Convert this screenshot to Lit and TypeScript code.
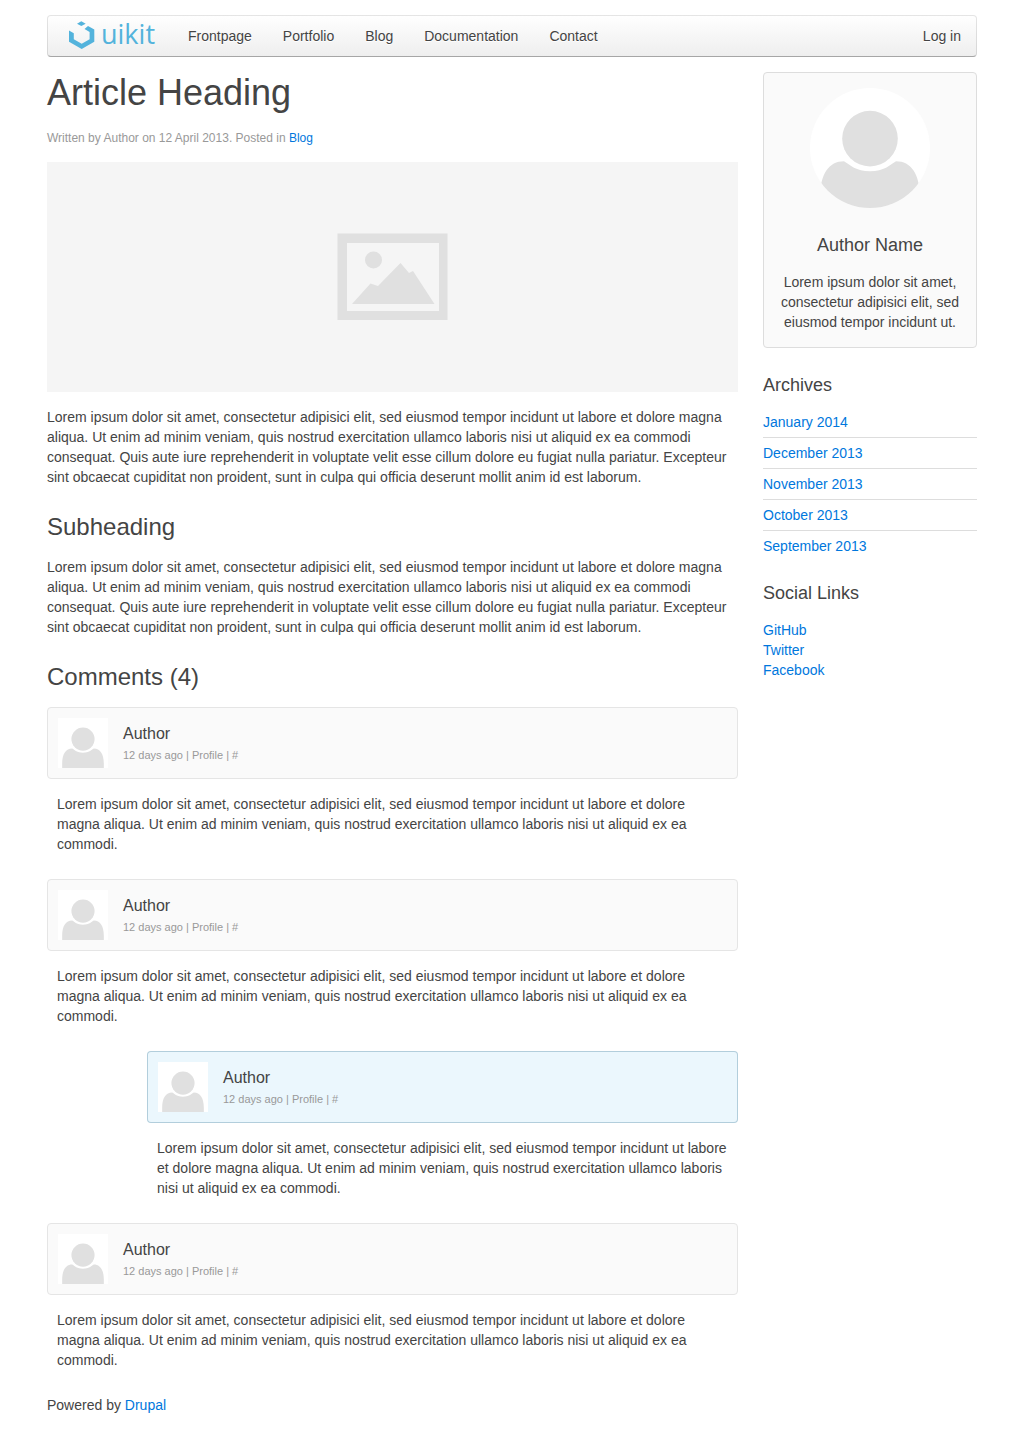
import { LitElement, html, css } from "lit";
import { customElement, property } from "lit/decorators.js";

const LOREM =
  "Lorem ipsum dolor sit amet, consectetur adipisici elit, sed eiusmod tempor incidunt ut labore et dolore magna aliqua. Ut enim ad minim veniam, quis nostrud exercitation ullamco laboris nisi ut aliquid ex ea commodi";
const LOREM_SHORT = LOREM + ".";
const LOREM_LONG =
  LOREM +
  " consequat. Quis aute iure reprehenderit in voluptate velit esse cillum dolore eu fugiat nulla pariatur. Excepteur sint obcaecat cupiditat non proident, sunt in culpa qui officia deserunt mollit anim id est laborum.";

const shared = css`
  * { box-sizing: border-box; }
  a { color: #07d; text-decoration: none; }
  a:hover { color: #059; text-decoration: underline; }
  h1, h2, h3, h4, p, ul { margin: 0; padding: 0; font-weight: normal; }
  ul { list-style: none; }
  svg { display: block; }
`;

@customElement("site-navbar")
export class SiteNavbar extends LitElement {
  static styles = [
    shared,
    css`
      :host { display: block; }
      .bar {
        display: flex;
        background: linear-gradient(to bottom, #fff, #eee);
        border: 1px solid rgba(0, 0, 0, 0.1);
        border-bottom-color: rgba(0, 0, 0, 0.3);
        background-origin: border-box;
        border-radius: 4px;
        text-shadow: 0 1px 0 #fff;
      }
      .brand { display: flex; align-items: center; padding: 0 15px 0 21px; }
      .brand svg { overflow: visible; }
      .wordmark { font-family: "Open Sans", "Noto Sans", sans-serif; font-size: 27px; fill: #53b3dc; text-shadow: none; }
      .links { display: flex; gap: 1px; }
      .links a { display: block; padding: 0 15px; line-height: 40px; color: #444; }
      .links a:hover { text-decoration: none; background: #fafafa; }
      .login { margin-left: auto; }
    `,
  ];

  render() {
    return html`
      <nav class="bar" aria-label="Main">
        <a class="brand" href="#" aria-label="uikit">
          <svg width="89" height="32" viewBox="0 0 89 32">
            <g fill="#53b3dc">
              <path d="M8 3.700 12.300 1.300 16.700 3.700 12.300 6.100Z" />
              <path d="M0 10.500 4.800 13.300V19.200L12.700 23.800 20.600 19.200V12L15.500 9 19 6.100 25.300 9.500V21.700L12.700 29 0 21.700Z" />
            </g>
            <text class="wordmark" x="32" y="24">uikit</text>
          </svg>
        </a>
        <ul class="links">
          ${["Frontpage", "Portfolio", "Blog", "Documentation", "Contact"].map(
            (t) => html`<li><a href="#">${t}</a></li>`
          )}
        </ul>
        <ul class="links login"><li><a href="#">Log in</a></li></ul>
      </nav>
    `;
  }
}

@customElement("user-avatar")
export class UserAvatar extends LitElement {
  @property({ type: Boolean, reflect: true }) large = false;

  static styles = [
    shared,
    css`
      :host { display: block; width: 50px; height: 50px; background: #fff; overflow: hidden; }
      :host([large]) { width: 120px; height: 120px; border-radius: 50%; }
      svg { width: 100%; height: 100%; }
    `,
  ];

  render() {
    return html`
      <svg viewBox="0 0 120 120" fill="#e0e0e0" role="img" aria-label="Avatar">
        <circle cx="60" cy="50.600" r="27.800" />
        <path d="M10 120V110C10 86 19 73.300 34 73.300 40 77 46 83.300 60 83.300S80 77 86 73.300C101 73.300 110 86 110 110V120Z" />
      </svg>
    `;
  }
}

@customElement("user-comment")
export class UserComment extends LitElement {
  @property({ type: Boolean }) primary = false;

  static styles = [
    shared,
    css`
      :host { display: block; }
      .header {
        display: flex;
        gap: 15px;
        margin-bottom: 15px;
        padding: 10px;
        border: 1px solid #e5e5e5;
        border-radius: 4px;
        background: #fafafa;
      }
      .primary { background: #ebf7fd; border-color: rgba(45, 112, 145, 0.3); }
      .title { margin-top: 5px; font-size: 16px; line-height: 22px; }
      .meta { margin-top: 2px; font-size: 11px; line-height: 16px; color: #999; }
      .body { padding: 0 10px; }
    `,
  ];

  render() {
    return html`
      <article>
        <header class="header ${this.primary ? "primary" : ""}">
          <user-avatar></user-avatar>
          <div>
            <h4 class="title">Author</h4>
            <p class="meta">12 days ago | Profile | #</p>
          </div>
        </header>
        <p class="body">${LOREM_SHORT}</p>
      </article>
    `;
  }
}

@customElement("app-root")
export class AppRoot extends LitElement {
  static styles = [
    shared,
    css`
      :host {
        display: block;
        background: #fff;
        color: #444;
        font: 14px/20px "Liberation Sans", Arial, sans-serif;
      }
      .container { max-width: 980px; margin: 0 auto; padding: 15px 25px; }
      .columns { display: grid; grid-template-columns: minmax(0, 691fr) minmax(0, 214fr); gap: 25px; margin-top: 15px; }
      .article-title { font-size: 36px; line-height: 42px; }
      .article-meta { margin: 15px 0; font-size: 12px; line-height: 18px; color: #999; }
      .hero { width: 100%; height: auto; margin-bottom: 15px; }
      h2 { margin: 25px 0 15px; font-size: 24px; line-height: 30px; }
      h3 { margin-bottom: 15px; font-size: 18px; line-height: 24px; }
      .comments { display: grid; gap: 25px; }
      .reply { padding-left: 100px; }
      .side { display: flex; flex-direction: column; gap: 25px; }
      .author { padding: 15px; border: 1px solid #ddd; border-radius: 4px; background: #fafafa; text-align: center; }
      .author user-avatar { margin: 0 auto 25px; }
      .lined li + li { margin-top: 5px; padding-top: 5px; border-top: 1px solid #ddd; }
      footer { margin-top: 25px; }
    `,
  ];

  private links(items: string[]) {
    return items.map((t) => html`<li><a href="#">${t}</a></li>`);
  }

  render() {
    return html`
      <div class="container">
        <site-navbar></site-navbar>
        <div class="columns">
          <main>
            <h1 class="article-title">Article Heading</h1>
            <p class="article-meta">Written by Author on 12 April 2013. Posted in <a href="#">Blog</a></p>
            <svg class="hero" viewBox="0 0 691 230" role="img" aria-label="Placeholder">
              <rect width="691" height="230" fill="#f5f5f5" />
              <path fill="#e0e0e0" fill-rule="evenodd" d="M290.500 71.500H400.500V158H290.500ZM300 81V149H392V81Z" />
              <circle cx="326.500" cy="98" r="8.500" fill="#e0e0e0" />
              <path fill="#e0e0e0" d="M305 142 323.500 121.500 331 124 353.500 101 362 111 366 109 387.500 142Z" />
            </svg>
            <p>${LOREM_LONG}</p>
            <h2>Subheading</h2>
            <p>${LOREM_LONG}</p>
            <h2>Comments (4)</h2>
            <div class="comments">
              <user-comment></user-comment>
              <user-comment></user-comment>
              <user-comment class="reply" primary></user-comment>
              <user-comment></user-comment>
            </div>
          </main>
          <aside class="side">
            <section class="author">
              <user-avatar large></user-avatar>
              <h3>Author Name</h3>
              <p>Lorem ipsum dolor sit amet, consectetur adipisici elit, sed eiusmod tempor incidunt ut.</p>
            </section>
            <section>
              <h3>Archives</h3>
              <ul class="lined">
                ${this.links(["January 2014", "December 2013", "November 2013", "October 2013", "September 2013"])}
              </ul>
            </section>
            <section>
              <h3>Social Links</h3>
              <ul>${this.links(["GitHub", "Twitter", "Facebook"])}</ul>
            </section>
          </aside>
        </div>
        <footer>Powered by <a href="#">Drupal</a></footer>
      </div>
    `;
  }
}
